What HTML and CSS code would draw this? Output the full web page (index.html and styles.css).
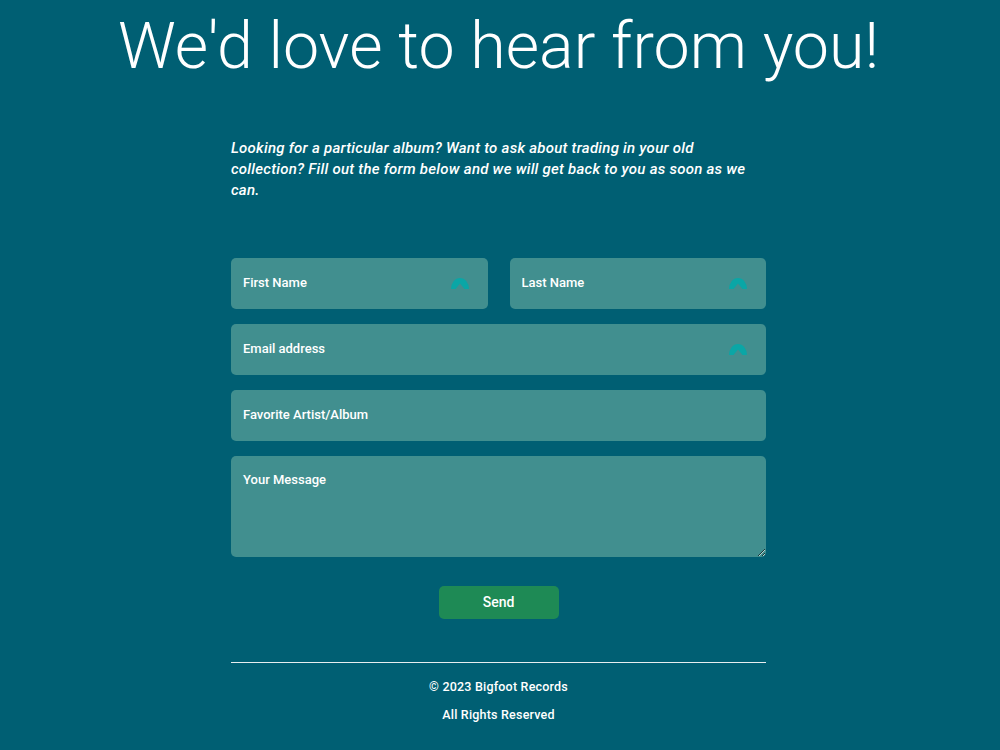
FILE: index.html
```html
<!DOCTYPE html>
<html lang="en">
<head>
    <meta charset="UTF-8" />
    <title>Contact - Bigfoot Records</title>
    <link rel="stylesheet" href="styles.css">
</head>
<body>
    <h1 class="title">We'd love to hear from you!</h1>

    <div class="wrap">
        <p class="intro">Looking for a particular album? Want to ask about trading in your old collection? Fill out the form below and we will get back to you as soon as we can.</p>

        <form class="contact-form" onsubmit="return false;">
            <div class="row">
                <div class="field">
                    <input type="text" placeholder="First Name" />
                    <svg class="fill-icon" width="18" height="12" viewBox="0 0 18 12"><path d="M0 12 A9 11 0 0 1 18 12 L13.5 12 L9 6.5 L4.5 12 Z" /></svg>
                </div>
                <div class="field">
                    <input type="text" placeholder="Last Name" />
                    <svg class="fill-icon" width="18" height="12" viewBox="0 0 18 12"><path d="M0 12 A9 11 0 0 1 18 12 L13.5 12 L9 6.5 L4.5 12 Z" /></svg>
                </div>
            </div>
            <div class="field">
                <input type="email" placeholder="Email address" />
                <svg class="fill-icon" width="18" height="12" viewBox="0 0 18 12"><path d="M0 12 A9 11 0 0 1 18 12 L13.5 12 L9 6.5 L4.5 12 Z" /></svg>
            </div>
            <div class="field">
                <input type="text" placeholder="Favorite Artist/Album" />
            </div>
            <div class="field">
                <textarea placeholder="Your Message"></textarea>
            </div>
            <button class="send-btn" type="submit">Send</button>
        </form>

        <footer class="footer">
            <p>&copy; 2023 Bigfoot Records</p>
            <p>All Rights Reserved</p>
        </footer>
    </div>
</body>
</html>
```

FILE: styles.css
```css
body {
    margin: 0;
    padding-right: 3px;
    background: #005f73;
    color: #fff;
    font-family: Roboto, "Liberation Sans", Arial, sans-serif;
}
.title {
    margin: 8px 0 0;
    text-align: center;
    font-size: 64.5px;
    font-weight: 300;
    line-height: 76px;
}
.wrap {
    width: 535px;
    margin: 0 auto;
}
.intro {
    margin: 54px 0 0;
    font-size: 15px;
    font-weight: 500;
    font-style: italic;
    letter-spacing: 0.25px;
    line-height: 21px;
}
.contact-form {
    margin-top: 57px;
    display: flex;
    flex-direction: column;
    gap: 15px;
}
.row {
    display: flex;
    gap: 22px;
}
.row .field {
    flex: 1;
}
.field {
    position: relative;
}
.field input, .field textarea {
    display: block;
    width: 100%;
    box-sizing: border-box;
    height: 51px;
    padding: 0 12px;
    border: none;
    border-radius: 5px;
    background: #418f8f;
    color: #fff;
    font-family: inherit;
    font-size: 13px;
    font-weight: 500;
    outline: none;
}
.field input {
    padding-bottom: 2px;
}
.field textarea {
    height: 101px;
    padding: 16px 12px;
    resize: vertical;
}
.field input::placeholder, .field textarea::placeholder {
    color: #fff;
    opacity: 1;
}
/* autofill key icon sitting in the input */
.fill-icon {
    position: absolute;
    right: 19px;
    top: 19px;
    fill: #0aa6a6;
}
.send-btn {
    align-self: center;
    margin-top: 14px;
    width: 120px;
    height: 33px;
    padding-bottom: 2px;
    border: none;
    border-radius: 5px;
    background: #1e8a55;
    color: #fff;
    font-family: inherit;
    font-size: 14px;
    font-weight: 500;
    cursor: pointer;
}
.footer {
    margin-top: 43px;
    border-top: 1px solid #e8eef0;
    padding-top: 10px;
    text-align: center;
    font-size: 12.5px;
    font-weight: 500;
    letter-spacing: 0.2px;
}
.footer p {
    margin: 0;
    line-height: 28px;
}
```
